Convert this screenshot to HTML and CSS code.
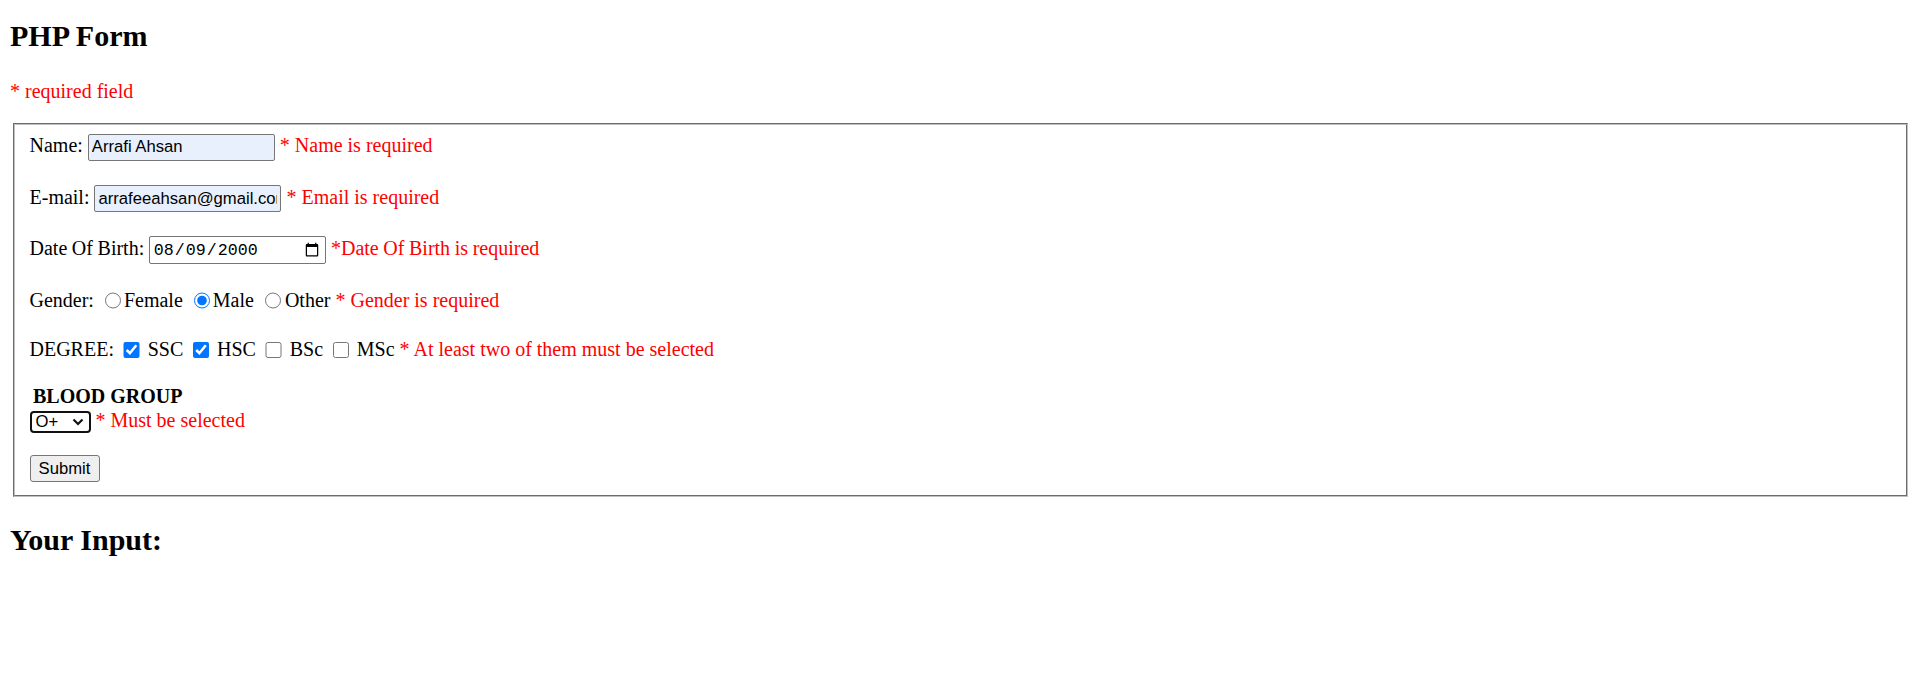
FILE: index.html
```html
<!DOCTYPE html>
<html lang="en">
<head>
<meta charset="utf-8">
<title>PHP Form</title>
<link rel="stylesheet" href="styles.css">
</head>
<body>
<h2 class="title">PHP Form</h2>
<p class="note"><span class="error">* required field</span></p>
<form class="form">
  <fieldset class="box">
    <div class="row row-name">Name: <input class="field autofill" type="text" value="Arrafi Ahsan"> <span class="error">* Name is required</span></div>
    <div class="row row-email">E-mail: <input class="field autofill" type="text" value="arrafeeahsan@gmail.com"> <span class="error">* Email is required</span></div>
    <div class="row row-dob">Date Of Birth: <input class="date" type="date" value="2000-08-09"> <span class="error">*Date Of Birth is required</span></div>
    <div class="row row-gender">Gender: <input class="radio" type="radio" name="g">Female <input class="radio" type="radio" name="g" checked>Male <input class="radio radio-last" type="radio" name="g">Other <span class="error">* Gender is required</span></div>
    <div class="row row-degree">DEGREE: <input class="check" type="checkbox" checked> SSC <input class="check" type="checkbox" checked> HSC <input class="check" type="checkbox"> BSc <input class="check" type="checkbox"> MSc <span class="error">* At least two of them must be selected</span></div>
    <div class="blood-label">BLOOD GROUP</div>
    <div class="row-select"><span class="select-wrap"><select class="select"><option>O+</option><option>O-</option><option>A+</option><option>A-</option><option>B+</option><option>B-</option><option>AB+</option><option>AB-</option></select><svg class="chev" width="12" height="8" viewBox="0 0 12 8"><path d="M1.5 1.5 L6 6 L10.5 1.5" fill="none" stroke="#111" stroke-width="2.2"/></svg></span> <span class="error">* Must be selected</span></div>
    <div class="row-submit"><button class="submit" type="button">Submit</button></div>
  </fieldset>
</form>
<h2 class="title title-input">Your Input:</h2>
</body>
</html>
```
FILE: styles.css
```css
html, body {
  background: #ffffff;
}
body {
  margin: 10px;
  font-family: "Liberation Serif", "Times New Roman", serif;
  font-size: 20px;
  color: #000000;
}
.title {
  font-size: 30px;
  font-weight: bold;
  margin: 9px 0 0 0;
  line-height: 34px;
}
.note {
  margin: 27px 0 0 0;
  line-height: 23px;
}
.error {
  color: #ff0000;
}
.form {
  margin: 20px 0 0 0;
}
.box {
  margin: 0 2.5px;
  padding: 6px 15px 12.5px 15px;
  border: 2px groove rgb(192, 192, 192);
  min-width: 0;
}
.row {
  height: 28px;
  line-height: 28px;
  white-space: nowrap;
}
.row-email { margin-top: 23.5px; }
.row-dob { margin-top: 23.5px; }
.row-gender { margin-top: 23.5px; }
.row-degree { margin-top: 21.5px; }
.field {
  box-sizing: border-box;
  width: 187px;
  height: 27px;
  margin: 0;
  padding: 1px 3px;
  font-family: "Liberation Sans", Arial, sans-serif;
  font-size: 16.67px;
  color: #000;
  border: 1px solid #767676;
  border-radius: 2px;
  vertical-align: middle;
}
.autofill {
  background: rgb(232, 240, 254);
}
.date {
  box-sizing: border-box;
  width: 177.5px;
  height: 28px;
  margin: 0;
  padding: 1px 3px;
  font-family: "Liberation Mono", "DejaVu Sans Mono", monospace;
  font-size: 16.67px;
  color: #000;
  background: #fff;
  border: 1px solid #767676;
  border-radius: 2px;
  vertical-align: middle;
}
.row-dob {
  word-spacing: -0.4px;
}
.radio {
  width: 16.25px;
  height: 16.25px;
  margin: 3.75px 2.5px 0 6.25px;
  vertical-align: -2px;
}
.radio-last {
  margin-right: 3.5px;
}
.check {
  width: 16.25px;
  height: 16.25px;
  margin: 3.75px 3px 3.75px 4.5px;
  vertical-align: -2px;
}
.blood-label {
  margin-top: 22px;
  margin-left: 3.5px;
  font-weight: bold;
  line-height: 23px;
}
.row-select {
  height: 24px;
  line-height: 24px;
  white-space: nowrap;
}
.select-wrap {
  position: relative;
  display: inline-block;
  vertical-align: middle;
  line-height: 0;
}
.select {
  appearance: none;
  -webkit-appearance: none;
  box-sizing: border-box;
  width: 61px;
  height: 22px;
  margin: 0;
  padding: 0 0 0 4px;
  font-family: "Liberation Sans", Arial, sans-serif;
  font-size: 16.67px;
  line-height: 18px;
  color: #000;
  background: #fff;
  border: 2px solid #101010;
  border-radius: 4px;
}
.chev {
  position: absolute;
  right: 7px;
  top: 7px;
  pointer-events: none;
}
.row-submit {
  margin-top: 23px;
  height: 27px;
}
.submit {
  box-sizing: border-box;
  width: 70px;
  height: 27px;
  margin: 0;
  padding: 1px 7px;
  font-family: "Liberation Sans", Arial, sans-serif;
  font-size: 16.67px;
  color: #000;
  background: #efefef;
  border: 1px solid #767676;
  border-radius: 3px;
}
.title-input {
  margin-top: 26px;
}
```
